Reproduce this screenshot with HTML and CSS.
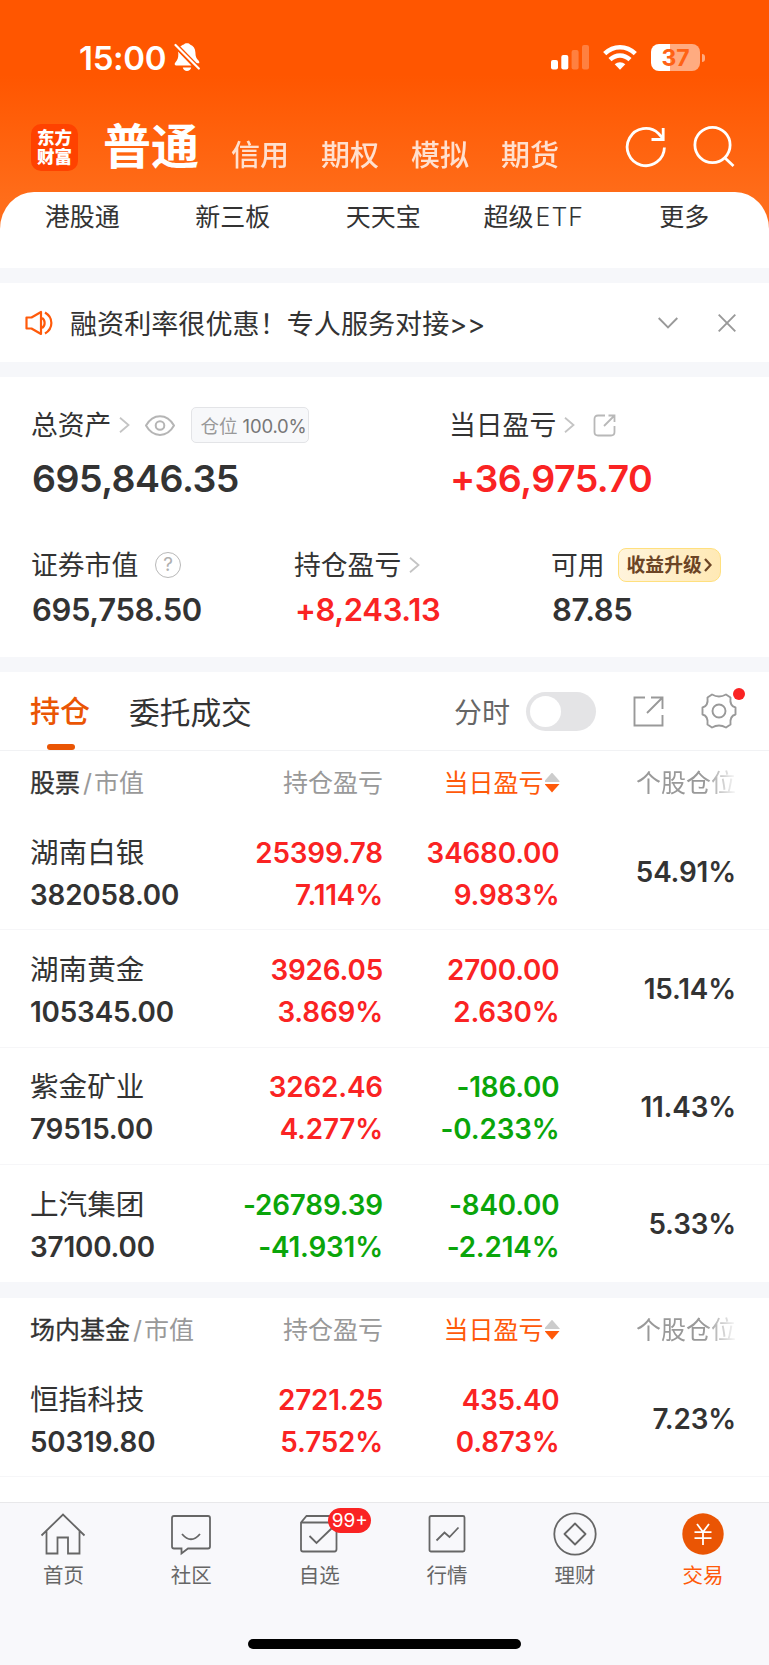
FILE: index.html
```
<!DOCTYPE html>
<html lang="zh-CN">

<head>
    <title>普通交易</title>
    <meta charset="utf-8">
    <link rel="stylesheet" href="styles.css">
</head>

<body>
    <div class="header">
        <div class="status-bar">
            <span class="time">15:00</span>
            <svg class="bell" width="26" height="29" viewBox="0 0 26 29">
                <path fill="#fff" d="M5.5 4.2C7 2.7 8.600 1.700 10 1.400C10.500-.1 15.500-.1 16 1.400C19.500 2.500 21.300 5.500 21.400 9.500C21.500 13.500 22.300 15.500 24.500 17.500C25.300 18.300 25.400 19.500 25.200 20.300L21.500 20.300Z M4 8.500L17.500 22.500L2 22.500C.5 22.500.2 20.500 1.500 19.200C3.700 17 4.400 14.500 4.300 10.500Z M8.800 24.500H17.200C16.500 29 9.500 29 8.800 24.500Z" />
                <path stroke="#ff5600" stroke-width="5" d="M1 1.500L25 26" />
                <path stroke="#fff" stroke-width="2.200" stroke-linecap="round" d="M1.500 2L24.800 25.500" />
            </svg>
            <svg class="signal" width="38" height="25" viewBox="0 0 38 25">
                <g fill="#fff">
                    <rect x="0" y="15" width="7" height="9.500" rx="2" />
                    <rect x="10.300" y="10" width="7" height="14.500" rx="2" />
                    <rect x="20.600" y="5" width="7" height="19.500" rx="2" opacity=".25" />
                    <rect x="31" y="0" width="7" height="24.500" rx="2" opacity=".25" />
                </g>
            </svg>
            <svg class="wifi" width="34" height="25" viewBox="0 0 34 25">
                <g fill="none" stroke="#fff" stroke-width="4.500">
                    <path d="M1.700 8.700C10.500.1 23.500.1 32.300 8.700" />
                    <path d="M7 14.600C13 9 21 9 27 14.600" />
                </g>
                <path fill="#fff" d="M17 24.700L11.700 19.200C14.700 16.500 19.300 16.500 22.300 19.200Z" />
            </svg>
            <div class="battery"><span>37</span></div>
            <i class="battery-cap"></i>
        </div>
        <div class="nav">
            <div class="logo">东方<br>财富</div>
            <div class="nav-current">普通</div>
            <div class="nav-item">信用</div>
            <div class="nav-item">期权</div>
            <div class="nav-item">模拟</div>
            <div class="nav-item">期货</div>
            <svg class="refresh" width="42" height="42" viewBox="0 0 42 42">
                <path fill="none" stroke="#fff" stroke-width="2.800" d="M39.400 21.500A18.600 18.600 0 1 1 33.500 7.500L38 12.500M38.200 2V13.500H26.500" />
            </svg>
            <svg class="search" width="42" height="42" viewBox="0 0 42 42">
                <circle cx="19.500" cy="19" r="17.600" fill="none" stroke="#fff" stroke-width="2.800" />
                <path stroke="#fff" stroke-width="2.800" d="M31.500 31.500L40.500 40" />
            </svg>
        </div>
    </div>

    <div class="shortcuts">
        <div>港股通</div>
        <div>新三板</div>
        <div>天天宝</div>
        <div>超级<span class="etf">ETF</span></div>
        <div>更多</div>
    </div>

    <div class="notice">
        <svg width="28" height="26" viewBox="0 0 28 26">
            <g fill="none" stroke="#ff5a0a" stroke-width="2.200" stroke-linejoin="round">
                <path d="M1.500 7.500H6.500L16 2V24L6.500 18.500H1.500Z" />
                <path d="M17 8C20.500 10 20.500 16 17 18" />
                <path d="M20 2.500C28.500 7.500 28.500 18.500 20 23.500" />
            </g>
        </svg>
        <div class="notice-text">融资利率很优惠！专人服务对接&gt;&gt;</div>
        <svg class="down" width="20" height="12" viewBox="0 0 20 12">
            <path fill="none" stroke="#999" stroke-width="1.900" d="M.7 1L10 10.300L19.300 1" />
        </svg>
        <svg class="close" width="18" height="18" viewBox="0 0 18 18">
            <path stroke="#999" stroke-width="1.900" d="M.7.700L17.300 17.300M17.300.700L.7 17.300" />
        </svg>
    </div>

    <div class="assets">
        <div class="assets-row total">
            <div class="cell">
                <div class="label">
                    <span class="text">总资产</span>
                    <svg class="arrow" width="11" height="16" viewBox="0 0 11 16">
                        <path d="M1 .7L9.500 8L1 15.300" />
                    </svg>
                    <svg class="eye" width="30" height="21" viewBox="0 0 30 21">
                        <path d="M1 10.500C8-2 22-2 29 10.500C22 23 8 23 1 10.500Z" />
                        <circle cx="15" cy="10.500" r="4.300" />
                    </svg>
                    <span class="position">仓位 <em>100.0%</em></span>
                </div>
                <div class="value">695,846.35</div>
            </div>
            <div class="cell">
                <div class="label">
                    <span class="text">当日盈亏</span>
                    <svg class="arrow" width="11" height="16" viewBox="0 0 11 16">
                        <path d="M1 .7L9.500 8L1 15.300" />
                    </svg>
                    <svg class="share" width="23" height="23" viewBox="0 0 23 23">
                        <path d="M12 1.500H5Q1.500 1.500 1.500 5V18Q1.500 21.500 5 21.500H18Q21.500 21.500 21.500 18V12M11 12L21 2M15.500 1.500H21.500V8" />
                    </svg>
                </div>
                <div class="value red">+36,975.70</div>
            </div>
        </div>
        <div class="assets-row detail">
            <div class="cell">
                <div class="label">
                    <span class="text">证券市值</span>
                    <i class="help">?</i>
                </div>
                <div class="value">695,758.50</div>
            </div>
            <div class="cell">
                <div class="label">
                    <span class="text">持仓盈亏</span>
                    <svg class="arrow" width="11" height="16" viewBox="0 0 11 16">
                        <path d="M1 .7L9.500 8L1 15.300" />
                    </svg>
                </div>
                <div class="value red">+8,243.13</div>
            </div>
            <div class="cell">
                <div class="label">
                    <span class="text">可用</span>
                    <div class="upgrade">
                        <span>收益升级</span>
                        <svg width="8" height="14" viewBox="0 0 8 14">
                            <path fill="none" stroke="#6b4425" stroke-width="2.300" d="M1 1L6.500 7L1 13" />
                        </svg>
                    </div>
                </div>
                <div class="value">87.85</div>
            </div>
        </div>
    </div>

    <div class="tabs">
        <div class="tab active">持仓</div>
        <div class="tab">委托成交</div>
        <div class="minute">分时</div>
        <div class="switch"></div>
        <svg class="export" width="31" height="31" viewBox="0 0 31 31">
            <path fill="none" stroke="#999" stroke-width="1.900" d="M12 1.500H1.500V29.500H29.500V19M14 17L29 2M18 1.500H29.500V13" />
        </svg>
        <div class="setting">
            <svg width="36" height="36" viewBox="0 0 36 36">
                <g fill="none" stroke="#999" stroke-width="1.900">
                    <path d="M11 1.500Q18 5.500 25 1.500L29.500 4.500Q28.500 13 34.500 14.500V21.500Q28.500 23 29.500 31.500L25 34.500Q18 30.500 11 34.500L6.500 31.500Q7.500 23 1.500 21.500V14.500Q7.500 13 6.500 4.500Z" stroke-linejoin="round" />
                    <circle cx="18" cy="18" r="6.500" />
                </g>
            </svg>
            <i class="dot"></i>
        </div>
    </div>

    <div class="holding">
        <div class="row head">
            <div><b>股票</b><span class="slash">/</span>市值</div>
            <div>持仓盈亏</div>
            <div class="sort">当日盈亏<i></i></div>
            <div class="fade">个股仓位</div>
        </div>
        <div class="row">
            <div><p class="name">湖南白银</p><p>382058.00</p></div>
            <div class="red"><p>25399.78</p><p>7.114%</p></div>
            <div class="red"><p>34680.00</p><p>9.983%</p></div>
            <div class="rate">54.91%</div>
        </div>
        <div class="row">
            <div><p class="name">湖南黄金</p><p>105345.00</p></div>
            <div class="red"><p>3926.05</p><p>3.869%</p></div>
            <div class="red"><p>2700.00</p><p>2.630%</p></div>
            <div class="rate">15.14%</div>
        </div>
        <div class="row">
            <div><p class="name">紫金矿业</p><p>79515.00</p></div>
            <div class="red"><p>3262.46</p><p>4.277%</p></div>
            <div class="green"><p>-186.00</p><p>-0.233%</p></div>
            <div class="rate">11.43%</div>
        </div>
        <div class="row">
            <div><p class="name">上汽集团</p><p>37100.00</p></div>
            <div class="green"><p>-26789.39</p><p>-41.931%</p></div>
            <div class="green"><p>-840.00</p><p>-2.214%</p></div>
            <div class="rate">5.33%</div>
        </div>
    </div>

    <div class="holding fund">
        <div class="row head">
            <div><b>场内基金</b><span class="slash">/</span>市值</div>
            <div>持仓盈亏</div>
            <div class="sort">当日盈亏<i></i></div>
            <div class="fade">个股仓位</div>
        </div>
        <div class="row">
            <div><p class="name">恒指科技</p><p>50319.80</p></div>
            <div class="red"><p>2721.25</p><p>5.752%</p></div>
            <div class="red"><p>435.40</p><p>0.873%</p></div>
            <div class="rate">7.23%</div>
        </div>
    </div>

    <div class="footer">
        <div class="menu">
            <div class="menu-item">
                <svg width="46" height="46" viewBox="0 0 46 46">
                    <path d="M1.500 23.500L23 2.500L44.500 23.500M6.500 19V41.500H17.500V25.500H28V41.500H39.500V19" />
                </svg>
                首页
            </div>
            <div class="menu-item">
                <svg width="46" height="46" viewBox="0 0 46 46">
                    <path d="M6 4H40Q42 4 42 6V34.500Q42 36.500 40 36.500H20L13.500 41.500V36.500H6Q4 36.500 4 34.500V6Q4 4 6 4Z" />
                    <path d="M14 22Q23 32.500 32 22" />
                </svg>
                社区
            </div>
            <div class="menu-item">
                <svg width="46" height="46" viewBox="0 0 46 46">
                    <path d="M10.500 4H40.500V37Q40.500 39.500 38.500 39.500H7Q5 39.500 5 37.500V10.500ZM5 10.500H40.500M13.500 24L20.500 31L36 16" />
                </svg>
                自选
                <span class="badge">99+</span>
            </div>
            <div class="menu-item">
                <svg width="46" height="46" viewBox="0 0 46 46">
                    <rect x="5.500" y="4" width="35" height="35.500" rx="1.500" />
                    <path d="M12.500 28.500L20.500 20.500L25.500 25L34.500 15.500" />
                </svg>
                行情
            </div>
            <div class="menu-item">
                <svg width="46" height="46" viewBox="0 0 46 46">
                    <circle cx="23" cy="22" r="20.700" />
                    <path d="M23 11.500L33.500 22L23 32.500L12.500 22Z" stroke-linejoin="round" />
                </svg>
                理财
            </div>
            <div class="menu-item on">
                <svg width="46" height="46" viewBox="0 0 46 46">
                    <circle cx="23" cy="22" r="20.700" />
                    <path d="M17 12L23 20L29 12M14.500 20.200H31.500M14.500 26.200H31.500M23 20V33" />
                </svg>
                交易
            </div>
        </div>
        <div class="home-bar"></div>
    </div>
</body>

</html>
```
FILE: styles.css
```
* {
    box-sizing: border-box;
}

body {
    margin: 0;
    width: 769px;
    height: 1665px;
    overflow: hidden;
    display: flex;
    flex-direction: column;
    background: #f6f7fa;
    color: #333;
    font-family: Inter, "Noto Sans CJK SC", sans-serif;
}

body > div {
    flex-shrink: 0;
}

svg {
    display: block;
    flex-shrink: 0;
}

p {
    margin: 0;
}

.red {
    color: #fa2323;
}

.green {
    color: #0aa50a;
}

/* 顶部 */
.header {
    height: 240px;
    background: linear-gradient(#ff5600 75px, #ff6d1a 200px);
}

.status-bar {
    display: flex;
    align-items: center;
    height: 115px;
    padding-left: 79px;
    color: #fff;
}

.time {
    width: 95px;
    font-size: 33px;
    font-weight: 600;
    letter-spacing: -0.3px;
}

.signal {
    margin-left: 351px;
}

.wifi {
    margin-left: 14px;
}

.battery {
    width: 49px;
    height: 27px;
    margin-left: 14px;
    border-radius: 8px;
    background: linear-gradient(90deg, #fff 18.500px, #ffab80 18.500px);
    color: #ff6214;
    font-size: 23px;
    font-weight: 700;
    line-height: 28px;
    text-align: center;
}

.battery-cap {
    width: 3px;
    height: 8px;
    margin-left: 2px;
    border-radius: 0 4px 4px 0;
    background: #ffab80;
}

.nav {
    display: flex;
    align-items: center;
    height: 64px;
    padding-left: 31px;
    color: #fff;
}

.logo {
    width: 47px;
    height: 47px;
    border-radius: 10px;
    background: #ff4200;
    font-size: 17.500px;
    font-weight: 900;
    line-height: 19px;
    padding-top: 4px;
    text-align: center;
}

.nav-current {
    width: 128px;
    margin-left: 25px;
    font-size: 48px;
    font-weight: 700;
    line-height: 60px;
}

.nav-item {
    width: 90px;
    padding-top: 17px;
    font-size: 29px;
    font-weight: 500;
    line-height: 36px;
    opacity: .8;
}

.refresh {
    margin-left: 34px;
}

.search {
    margin-left: 26px;
}

/* 快捷入口 */
.shortcuts {
    display: grid;
    grid-template-columns: repeat(5, 150.500px);
    height: 76px;
    margin-top: -48px;
    padding: 7px 0 0 7px;
    border-radius: 34px 34px 0 0 / 37px 37px 0 0;
    background: #fff;
    font-size: 25px;
    line-height: 36px;
    text-align: center;
}

.etf {
    margin-left: 2px;
    font-weight: 300;
    letter-spacing: 1px;
}

.notice {
    display: flex;
    align-items: center;
    height: 79px;
    margin-top: 15px;
    padding-left: 25px;
    background: #fff;
}

.notice-text {
    width: 588px;
    padding: 0 0 1px 17px;
    font-size: 27.100px;
}

.down {
    margin-left: 17px;
}

.close {
    margin-left: 40px;
}

/* 资产 */
.assets {
    height: 280px;
    margin-top: 15px;
    padding: 28px 0 0 32px;
    background: #fff;
}

.assets-row {
    display: grid;
}

.total {
    grid-template-columns: 418px 1fr;
    height: 140px;
}

.detail {
    grid-template-columns: 263px 257px 1fr;
}

.label {
    display: flex;
    align-items: center;
    height: 40px;
    font-size: 26.800px;
}

.text {
    margin: -3px 0 0 -1px;
}

.value {
    font-weight: 600;
    white-space: nowrap;
}

.total .value {
    padding-top: 11px;
    font-size: 37.500px;
    letter-spacing: -0.5px;
    line-height: 46px;
}

.detail .value {
    padding-top: 5px;
    font-size: 31px;
    letter-spacing: -0.350px;
    line-height: 40px;
}

.arrow {
    margin-left: 8px;
}

.arrow path {
    fill: none;
    stroke: #c4c4c4;
    stroke-width: 1.800;
}

.eye {
    margin-left: 15px;
    fill: none;
    stroke: #b5b5b5;
    stroke-width: 2;
}

.share {
    margin-left: 18px;
    fill: none;
    stroke: #b8b8b8;
    stroke-width: 1.800;
}

.position {
    width: 118px;
    height: 36px;
    margin-left: 16px;
    padding: 1px 0 0 8px;
    border: 1.500px solid #e3e4e7;
    border-radius: 5px;
    background: #f7f8fa;
    color: #999;
    font-size: 18.500px;
    line-height: 34px;
    white-space: nowrap;
}

.position em {
    color: #777;
    font-style: normal;
    letter-spacing: -0.2px;
}

.help {
    width: 26px;
    height: 26px;
    margin-left: 17px;
    border: 1.800px solid #b8b8b8;
    border-radius: 50%;
    color: #b0b0b0;
    font-size: 19px;
    font-style: normal;
    line-height: 23px;
    text-align: center;
}

.upgrade {
    display: flex;
    align-items: center;
    width: 103px;
    height: 34px;
    margin-left: 13px;
    padding-left: 8px;
    border: 1.500px solid #ffe07e;
    border-radius: 8px 10px 10px 8px;
    background: linear-gradient(90deg, #fff4dc, #ffe9b5);
    color: #6b4425;
    font-size: 18.800px;
    font-weight: 700;
    white-space: nowrap;
}

.upgrade span {
    margin-top: -3px;
}

.upgrade svg {
    margin-left: 2px;
}

/* 持仓 tab */
.tabs {
    display: flex;
    align-items: center;
    height: 79px;
    margin-top: 15px;
    padding-left: 30px;
    border-bottom: 1px solid #f1f2f4;
    background: #fff;
}

.tab {
    width: 325px;
    padding-bottom: 1px;
    font-size: 30.700px;
}

.tab.active {
    position: relative;
    width: 99px;
    height: 78px;
    color: #ea5504;
    font-size: 30px;
    font-weight: 500;
    line-height: 78px;
}

.tab.active::after {
    content: "";
    position: absolute;
    left: 17px;
    bottom: 0;
    width: 28px;
    height: 6px;
    border-radius: 3px;
    background: #ea5504;
}

.minute {
    width: 72px;
    padding-bottom: 1px;
    color: #666;
    font-size: 28px;
}

.switch {
    width: 70px;
    height: 39px;
    padding: 4px;
    border-radius: 20px;
    background: #e4e4e6;
}

.switch::after {
    content: "";
    display: block;
    width: 31px;
    height: 31px;
    border-radius: 50%;
    background: #fff;
}

.export {
    margin-left: 37px;
}

.setting {
    position: relative;
    margin-left: 37px;
}

.dot {
    position: absolute;
    top: -5px;
    right: -8px;
    width: 12px;
    height: 12px;
    border-radius: 50%;
    background: #fa2323;
}

/* 持仓列表 */
.holding {
    background: #fff;
}

.fund {
    flex: 1;
    margin-top: 16px;
}

.row {
    display: grid;
    grid-template-columns: 180px 173px 176.500px 176.500px;
    align-items: center;
    height: 117.300px;
    padding: 5px 33px 0 30px;
    border-bottom: 1.500px solid #f6f6f8;
    font-size: 27.800px;
    font-weight: 600;
    letter-spacing: -0.150px;
    line-height: 42px;
    text-align: right;
    white-space: nowrap;
}

.row:last-child {
    border-bottom-color: transparent;
}

.fund .row:last-child {
    border-bottom-color: #f6f6f8;
}

.row div:first-child {
    text-align: left;
}

.rate {
    padding-bottom: 3px;
}

.name {
    font-size: 28.600px;
    font-weight: 400;
    letter-spacing: 0;
}

.head {
    height: 62px;
    padding: 1px 33px 0 30px;
    border-bottom: 0;
    color: #999;
    font-size: 25px;
    font-weight: 400;
    letter-spacing: 0;
}

.head b {
    color: #333;
    font-weight: 400;
    -webkit-text-stroke: .3px #333;
}

.slash {
    padding: 0 2px 0 3px;
}

.sort {
    display: flex;
    align-items: center;
    justify-content: flex-end;
    color: #ff5a0a;
}

/* 上下两个三角 */
.sort i {
    width: 15px;
    height: 20px;
    margin-left: 1px;
    background: linear-gradient(#ccc 9px, transparent 9px, transparent 11px, #ff5a0a 11px);
    clip-path: polygon(50% 0, 100% 43%, 100% 57%, 50% 100%, 0 57%, 0 43%);
}

.fade {
    -webkit-mask-image: linear-gradient(90deg, #000 145px, transparent 178px);
    mask-image: linear-gradient(90deg, #000 145px, transparent 178px);
}

/* 底部菜单 */
.footer {
    height: 163px;
    border-top: 1.500px solid #e8e8ea;
    background: #f8f8fb;
}

.menu {
    display: grid;
    grid-template-columns: repeat(6, 127.900px);
    height: 136px;
    margin-left: -0.5px;
    padding-top: 9px;
}

.menu-item {
    position: relative;
    color: #666;
    font-size: 20.500px;
    line-height: 32px;
    text-align: center;
}

.menu-item svg {
    margin: 0 auto 2px;
    fill: none;
    stroke: #666;
    stroke-width: 1.800;
}

.menu-item.on {
    color: #ff5a0a;
}

.menu-item.on circle {
    fill: #ea5504;
    stroke: none;
}

.menu-item.on path {
    stroke: #fff;
}

.badge {
    position: absolute;
    top: -4px;
    left: 73px;
    width: 43px;
    height: 25px;
    border-radius: 13px;
    background: #fa2323;
    color: #fff;
    font-size: 19px;
    line-height: 26px;
}

.home-bar {
    width: 273px;
    height: 10px;
    margin: 0 auto;
    border-radius: 5px;
    background: #000;
}
```
